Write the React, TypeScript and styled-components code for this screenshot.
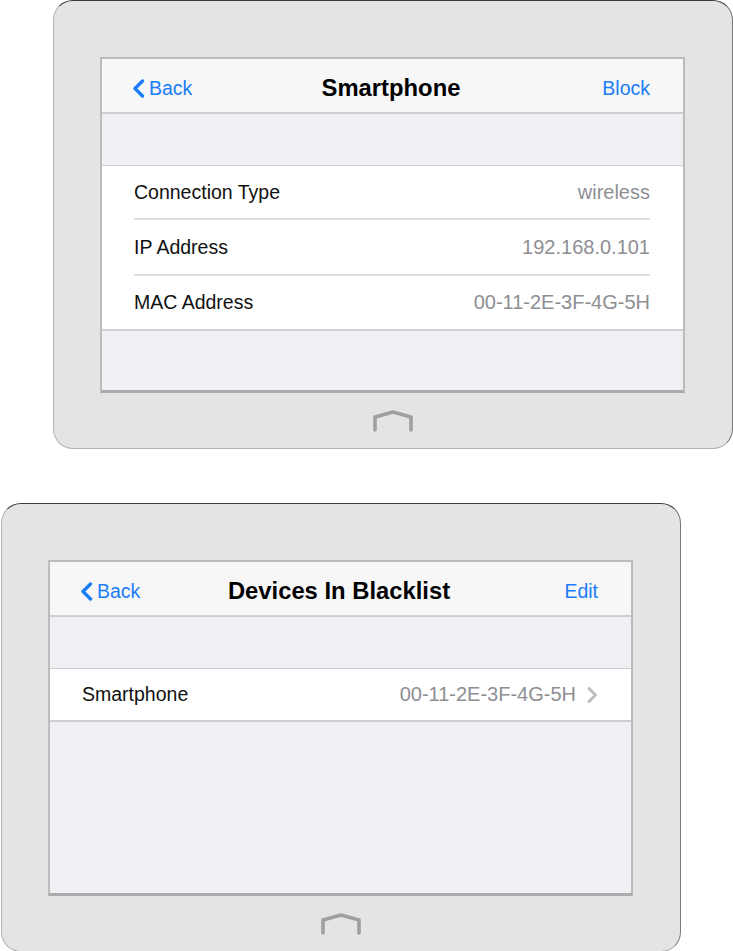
import styled, { createGlobalStyle } from 'styled-components';

const GlobalStyle = createGlobalStyle`
  html, body {
    margin: 0;
    padding: 0;
    background: #ffffff;
  }
  body {
    font-family: 'Liberation Sans', Arial, sans-serif;
  }
`;

const Page = styled.div`
  display: flex;
  flex-direction: column;
  gap: 54px;
  width: 733px;
`;

const Tablet = styled.div<{ $offset: number }>`
  box-sizing: border-box;
  width: 680px;
  height: 449px;
  margin-left: ${(p) => p.$offset}px;
  padding: 56px 47px 0 46px;
  background: #e4e4e4;
  border: 1px solid #b4b4b4;
  border-top-color: #3c3c3c;
  border-right-color: #7a7a7a;
  border-radius: 20px;
  display: flex;
  flex-direction: column;
  align-items: center;
`;

const Screen = styled.div`
  box-sizing: border-box;
  width: 585px;
  height: 337px;
  background: #efeff4;
  border: 2px solid #bcbcbc;
  border-bottom: 3px solid #ababab;
  display: flex;
  flex-direction: column;
`;

const NavBar = styled.div`
  height: 55px;
  flex-shrink: 0;
  box-sizing: border-box;
  padding: 5px 33px 0 30px;
  background: #f7f7f7;
  border-bottom: 2px solid #cfcfd3;
  display: grid;
  grid-template-columns: 1fr auto 1fr;
  align-items: center;
`;

const NavButton = styled.span<{ $right?: boolean }>`
  display: flex;
  align-items: center;
  justify-content: ${(p) => (p.$right ? 'flex-end' : 'flex-start')};
  gap: 4px;
  color: #1a7cf7;
  font-size: 19.5px;
`;

const Title = styled.span`
  color: #000;
  font-size: 23.8px;
  font-weight: bold;
`;

const Spacer = styled.div`
  height: 51px;
  flex-shrink: 0;
`;

const Group = styled.div`
  background: #ffffff;
  border-top: 1px solid #cfcfd3;
  border-bottom: 2px solid #cfcfd3;
  padding: 0 33px 0 32px;
`;

const Row = styled.div<{ $h: number }>`
  height: ${(p) => p.$h}px;
  display: flex;
  align-items: center;
  justify-content: space-between;
  font-size: 19.5px;
  & + & {
    border-top: 2px solid #dcdce0;
  }
`;

const Label = styled.span`
  color: #111;
`;

const Value = styled.span`
  display: flex;
  align-items: center;
  gap: 10px;
  color: #8e8e93;
  font-size: 20px;
`;

const HomeButton = styled.div`
  height: 55px;
  display: flex;
  align-items: center;
  justify-content: center;
  box-sizing: border-box;
`;

const BackChevron = () => (
  <svg width="13" height="19" viewBox="0 0 13 19">
    <polyline points="10.5,2 3,9.5 10.5,17" fill="none" stroke="#1a7cf7" strokeWidth="3.4" strokeLinecap="round" strokeLinejoin="round" />
  </svg>
);

const RightChevron = () => (
  <svg width="12" height="18" viewBox="0 0 12 18">
    <polyline points="3,2.5 9.5,9 3,15.5" fill="none" stroke="#bdbdc2" strokeWidth="3" strokeLinecap="round" strokeLinejoin="round" />
  </svg>
);

const HomeIcon = () => (
  <svg width="42" height="24" viewBox="0 0 42 24">
    <path d="M3 21 V8 L21 3 L39 8 V21" fill="none" stroke="#9f9f9f" strokeWidth="3.6" strokeLinecap="round" strokeLinejoin="round" />
  </svg>
);

type Item = { label: string; value: string; h: number; chevron?: boolean };

const Device = ({
  offset,
  title,
  action,
  items,
}: {
  offset: number;
  title: string;
  action: string;
  items: Item[];
}) => (
  <Tablet $offset={offset}>
    <Screen>
      <NavBar>
        <NavButton>
          <BackChevron />
          Back
        </NavButton>
        <Title>{title}</Title>
        <NavButton $right>{action}</NavButton>
      </NavBar>
      <Spacer />
      <Group>
        {items.map((it) => (
          <Row key={it.label} $h={it.h}>
            <Label>{it.label}</Label>
            <Value>
              {it.value}
              {it.chevron && <RightChevron />}
            </Value>
          </Row>
        ))}
      </Group>
    </Screen>
    <HomeButton>
      <HomeIcon />
    </HomeButton>
  </Tablet>
);

export default function App() {
  return (
    <>
      <GlobalStyle />
      <Page>
        <Device
          offset={53}
          title="Smartphone"
          action="Block"
          items={[
            { label: 'Connection Type', value: 'wireless', h: 52 },
            { label: 'IP Address', value: '192.168.0.101', h: 54 },
            { label: 'MAC Address', value: '00-11-2E-3F-4G-5H', h: 53 },
          ]}
        />
        <Device
          offset={1}
          title="Devices In Blacklist"
          action="Edit"
          items={[{ label: 'Smartphone', value: '00-11-2E-3F-4G-5H', h: 51, chevron: true }]}
        />
      </Page>
    </>
  );
}
